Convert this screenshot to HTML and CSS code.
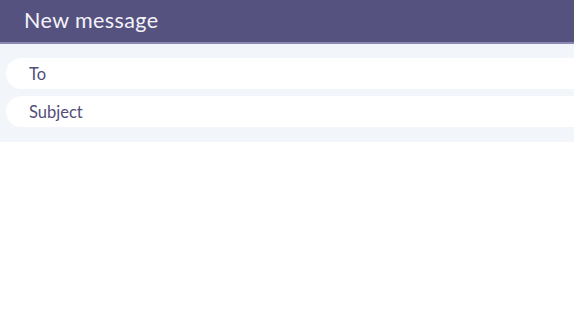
FILE: index.html
```html
<!DOCTYPE html>
<html lang="en">
<head>
    <meta charset="UTF-8">
    <meta name="viewport" content="width=device-width, initial-scale=1.0">
    <title>New message</title>
    <link rel="stylesheet" href="styles.css">
</head>
<body>

    <div class="compose">
        <div class="compose-header">New message</div>
        <form class="compose-fields">
            <input type="text" class="field" placeholder="To">
            <input type="text" class="field" placeholder="Subject">
        </form>
    </div>

</body>
</html>
```

FILE: styles.css
```css
body {
    font-family: Lato, "Open Sans", sans-serif;
    background-color: white;
    margin: 0;
}
.compose {
    width: 100%;
}
.compose-header {
    background-color: #55527f;
    color: #f4f3fa;
    font-size: 21.5px;
    letter-spacing: 0.4px;
    height: 42px;
    line-height: 40px;
    padding-left: 24px;
    border-bottom: 2px solid #8b89b1;
}
.compose-fields {
    background-color: #f2f5f9;
    padding: 14px 0 15px 6px;
    display: flex;
    flex-direction: column;
    gap: 7px;
}
.field {
    font-family: inherit;
    font-size: 16.5px;
    color: #514e78;
    background-color: white;
    border: none;
    outline: none;
    height: 31px;
    padding: 0 0 0 23px;
    border-radius: 16px 0 0 16px;
    box-sizing: border-box;
    width: 100%;
}
.field::placeholder {
    color: #514e78;
    opacity: 1;
}
```
